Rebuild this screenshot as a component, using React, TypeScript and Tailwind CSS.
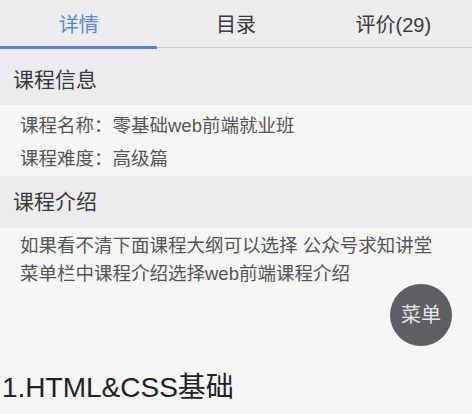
import React from "react";

const font = { fontFamily: '"Liberation Sans", "Noto Sans CJK SC", sans-serif' };

export default function App() {
  const tabs = ["详情", "目录", "评价(29)"];
  return (
    <div
      className="relative w-[472px] h-[414px] overflow-hidden bg-[#f6f6f7] text-[#333]"
      style={font}
    >
      <div className="flex bg-[#ededef]">
        {tabs.map((t, i) => (
          <div key={t} className="flex-1 flex flex-col">
            <div
              className={
                "h-[46px] pt-[3px] flex items-center justify-center text-[20px] " +
                (i === 0 ? "text-[#5b87d3]" : "text-[#3a3a3a]")
              }
            >
              {t}
            </div>
            {i === 0 ? (
              <div className="h-[3px] bg-[#5b84cf]" />
            ) : (
              <div className="h-[3px] flex flex-col justify-center">
                <div className="h-px bg-[#c9c9cc]" />
              </div>
            )}
          </div>
        ))}
      </div>

      <div className="h-[56px] pt-[6px] px-[13px] flex items-center bg-[#ececee] text-[21px] text-[#3a3a3a]">
        课程信息
      </div>
      <div className="pt-[4px] pb-[1px] px-[20px] bg-[#f7f7f8] text-[18.5px] text-[#555]">
        <div className="h-[33px] flex items-center">课程名称：零基础web前端就业班</div>
        <div className="h-[33px] flex items-center">课程难度：高级篇</div>
      </div>

      <div className="h-[52px] px-[13px] flex items-center bg-[#ececee] text-[21px] text-[#3a3a3a]">
        课程介绍
      </div>
      <div className="pt-[4px] px-[20px] text-[18.5px] leading-[28px] text-[#555] whitespace-nowrap">
        <div>如果看不清下面课程大纲可以选择 公众号求知讲堂</div>
        <div>菜单栏中课程介绍选择web前端课程介绍</div>
      </div>

      <div className="mt-[82px] pl-[2px] text-[28px] leading-[36px] text-[#222]">
        1.HTML&amp;CSS基础
      </div>

      <div className="absolute left-[390px] top-[284px] w-[62px] h-[62px] rounded-full bg-[#5e5e63] flex items-center justify-center text-[20px] text-[#e6e6e6]">
        菜单
      </div>
    </div>
  );
}
